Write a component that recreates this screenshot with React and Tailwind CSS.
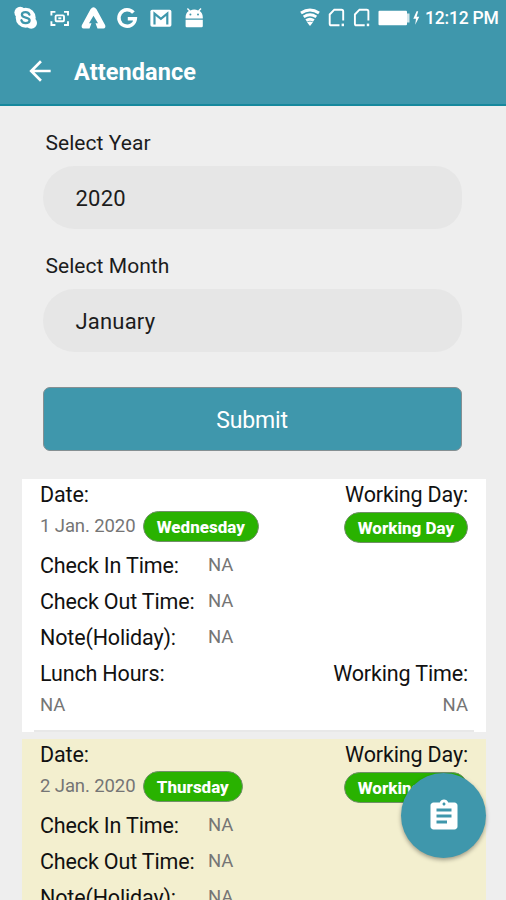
import { MdArrowBack, MdAssignment } from "react-icons/md";

function StatusIcons() {
  return (
    <svg width="210" height="36" viewBox="0 0 210 36" fill="white" className="block">
      {/* Skype */}
      <circle cx="20.2" cy="12.6" r="5.8" />
      <circle cx="31.2" cy="23" r="5.8" />
      <circle cx="25.7" cy="17.8" r="10" />
      <path d="M29.4 14.600c-.7-1.700-2-2.400-3.800-2.400-2.200 0-3.700.9-3.700 2.600 0 3.800 7.700 1.700 7.700 5.500 0 1.900-1.700 2.800-4 2.800-2.200 0-3.600-1-4.200-2.800" fill="none" stroke="#3f97ac" strokeWidth="2.3" strokeLinecap="round" />
      {/* Screen capture */}
      <g fill="none" stroke="white" strokeWidth="1.9">
        <path d="M51.400 15.500v-3.600h4M64 11.900h4v3.600M68 21.200V25h-4M55.400 25h-4v-3.800" />
        <rect x="55.600" y="15.400" width="8.400" height="5.900" rx="1" />
        <path d="M58.300 18.300h3" />
      </g>
      {/* Triangle */}
      <path d="M90.500 9.300Q93.500 5 96.500 9.300L105.200 25.200Q106 28.300 103.400 28.500H97.500L95.500 23.300H98L93.500 15.800L89 23.300H91.500L89.500 28.500H83.600Q81 28.300 81.800 25.200Z" />
      {/* G */}
      <path d="M133.400 12.700A8.200 8.200 0 1 0 135.300 18.800H127.800" fill="none" stroke="white" strokeWidth="3.500" />
      {/* Mail */}
      <rect x="150.400" y="9.700" width="21" height="17" rx="1.800" />
      <path d="M154.500 24.600V13.600L160.900 18.900L167.300 13.600V24.600" fill="none" stroke="#3f97ac" strokeWidth="2.200" />
      {/* Android */}
      <path d="M185.600 18.600v-1.300c0-3 1.200-5 3.200-6.300l-1.900-2 1-.9 2.400 2.300a9.500 9.500 0 0 1 7.800 0l2.400-2.300 1 .9-1.900 2c2 1.300 3.200 3.300 3.200 6.300v1.300ZM185.600 19.700h17.200v6.300q0 1.200-1.200 1.200h-14.800q-1.200 0-1.200-1.200Z" />
      <circle cx="190.400" cy="14.400" r="1" fill="#3f97ac" />
      <circle cx="198" cy="14.400" r="1" fill="#3f97ac" />
    </svg>
  );
}

function SystemIcons() {
  return (
    <svg width="124" height="36" viewBox="298 0 124 36" fill="white" className="block shrink-0">
      {/* Wifi */}
      <g fill="none" stroke="white" strokeWidth="2.900">
        <path d="M301 13Q310 6.800 319 13" />
        <path d="M303.700 16.900Q310 12.700 316.300 16.900" />
        <path d="M306.200 20.500Q310 17.900 313.800 20.500" />
      </g>
      <path d="M307 22.300Q310 20.800 313 22.300L310 26Z" />
      {/* SIM cards */}
      {[0, 25.200].map((dx) => (
        <g key={dx} transform={`translate(${dx} 0)`}>
          <path d="M339.500 25.300H331.300Q329.700 25.300 329.700 23.700V14.500L334.300 9.700H341.500Q343.200 9.700 343.200 11.400V20.500" fill="none" stroke="white" strokeWidth="1.900" />
          <rect x="341.600" y="23.600" width="2.400" height="2.600" />
        </g>
      ))}
      {/* Battery */}
      <rect x="378.500" y="10.700" width="28.500" height="14.600" rx="1" />
      <path d="M407 13.500h2.500v9H407Z" fill="#d5e6eb" />
      <path d="M416.600 11.300L413.300 18.800H416L415.200 24.800L419.300 16.700H416.600L418.200 11.300Z" />
    </svg>
  );
}

function Field({ label, value }) {
  return (
    <div className="mb-[23px]">
      <div className="ml-[3px] h-[37px] text-[21px] leading-[28px] tracking-[0.050px] text-[#1c1c1c]">{label}</div>
      <div className="flex h-[63px] items-center rounded-l-[32px] rounded-r-[27px] bg-[#e6e6e6] pt-px pl-[33px] text-[22px] tracking-[0.200px] text-[#1c1c1c]">
        {value}
      </div>
    </div>
  );
}

function Badge({ children }) {
  return (
    <span className="flex h-[31px] items-center rounded-full border border-[#708f68] bg-[#29b200] px-[12.800px] pt-[2px] text-[17px] font-extrabold text-white">
      {children}
    </span>
  );
}

function TimeRow({ label }) {
  return (
    <div className="flex h-9 items-center">
      <span className="w-[168px] pt-px">{label}</span>
      <span className="pb-px text-[18.500px] tracking-normal text-[#757575]">NA</span>
    </div>
  );
}

function DayCard({ date, day, color }) {
  return (
    <section className={`${color} ml-[22px] h-[253px] w-[464px] px-[18px] pt-px text-[21.500px] tracking-[-0.150px] text-[#111]`}>
      <div className="flex h-[30px] items-center justify-between">
        <span>Date:</span>
        <span>Working Day:</span>
      </div>
      <div className="mb-[5px] flex h-[33px] items-start justify-between tracking-normal">
        <div className="flex items-center gap-[8px] pt-px">
          <span className="w-[95px] whitespace-nowrap text-[18.500px] tracking-[-0.100px] text-[#757575]">{date}</span>
          <Badge>{day}</Badge>
        </div>
        <div className="pt-[2px]">
          <Badge>Working Day</Badge>
        </div>
      </div>
      <TimeRow label="Check In Time:" />
      <TimeRow label="Check Out Time:" />
      <TimeRow label="Note(Holiday):" />
      <div className="flex h-9 items-center justify-between pt-px">
        <span>Lunch Hours:</span>
        <span>Working Time:</span>
      </div>
      <div className="flex h-[26px] items-center justify-between pt-[2px] text-[18.500px] tracking-normal text-[#757575]">
        <span>NA</span>
        <span>NA</span>
      </div>
      <div className="-mx-[6px] mt-[12px] h-[2px] bg-[#e8e8e8]" />
    </section>
  );
}

export default function App() {
  return (
    <div className="relative h-[900px] w-[506px] overflow-hidden bg-[#eeeeee] font-[Roboto,sans-serif]">
      <header className="h-[106px] border-b-2 border-[#16889d] bg-[#3f97ac] text-white">
        <div className="flex h-9 justify-between">
          <StatusIcons />
          <div className="flex">
            <SystemIcons />
            <span className="w-[84px] pl-[3px] text-[17.500px] leading-[37px] font-medium tracking-[-0.200px] whitespace-nowrap">12:12 PM</span>
          </div>
        </div>
        <div className="flex h-[70px] items-center pl-[24px]">
          <MdArrowBack className="size-8" />
          <h1 className="ml-[18px] pt-[3px] text-[23.500px] font-bold tracking-[0.080px]">Attendance</h1>
        </div>
      </header>
      <form className="ml-[42.500px] w-[419px] pt-[23px]">
        <Field label="Select Year" value="2020" />
        <Field label="Select Month" value="January" />
        <button type="button" className="mt-[35px] block h-16 w-full rounded-[7px] border border-[#858f92] bg-[#3f97ac] pt-[4px] text-[23px] tracking-[-0.150px] text-white">
          Submit
        </button>
      </form>
      <main className="mt-[28px] flex flex-col gap-[7px]">
        <DayCard date="1 Jan. 2020" day="Wednesday" color="bg-white" />
        <DayCard date="2 Jan. 2020" day="Thursday" color="bg-[#f3efcf]" />
      </main>
      <button type="button" className="absolute top-[773px] left-[401px] flex size-[85px] items-center justify-center rounded-full bg-[#3f97ac] text-white shadow-[0_2px_4px_rgba(0,0,0,0.35)]">
        <MdAssignment className="size-[36px]" />
      </button>
    </div>
  );
}
